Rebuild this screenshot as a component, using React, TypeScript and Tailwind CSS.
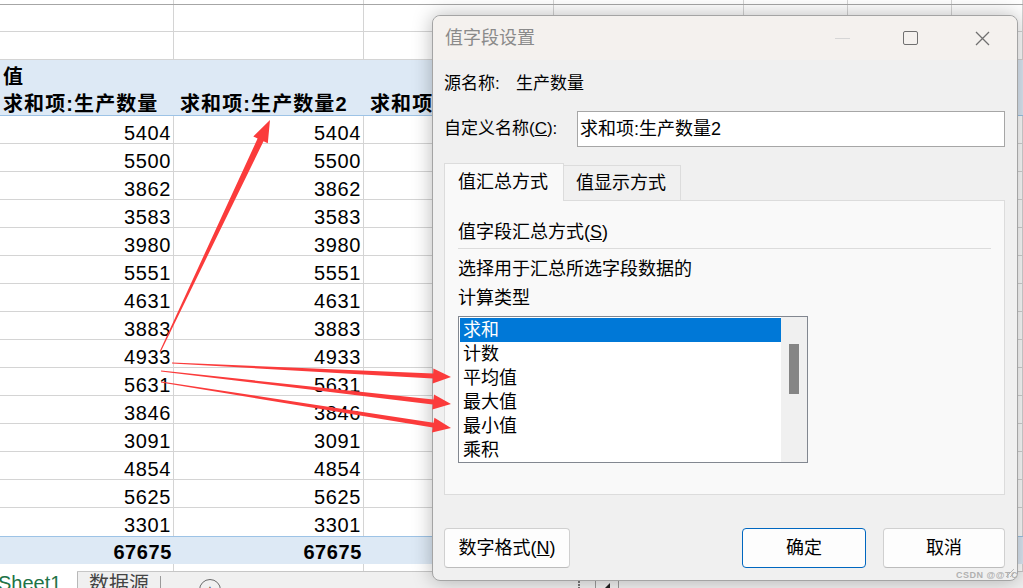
import React from 'react'

const COLS = ['w-[174px]', 'w-[190px]', 'w-[190px]', 'w-[190px]', 'w-[104px]', 'w-[104px]', 'flex-1']

const values = [5404, 5500, 3862, 3583, 3980, 5551, 4631, 3883, 4933, 5631, 3846, 3091, 4854, 5625, 3301]
const total = values.reduce((sum, v) => sum + v, 0)

const methods = ['求和', '计数', '平均值', '最大值', '最小值', '乘积']

type RowProps = {
  className?: string
  cells?: React.ReactNode[]
  lines?: boolean
}

function Row({ className = '', cells = [], lines = true }: RowProps) {
  return (
    <div className={`flex ${className}`}>
      {COLS.map((w, i) => (
        <div key={i} className={`${w} shrink-0 overflow-visible whitespace-nowrap ${lines ? 'border-r border-[#d4d4d4]' : ''}`}>
          {cells[i]}
        </div>
      ))}
    </div>
  )
}

function Num({ v, bold = false }: { v: number; bold?: boolean }) {
  return (
    <div className={`pr-[2px] text-right text-[20px] leading-[20px] tracking-[0.6px] text-black ${bold ? 'pt-[5px] font-bold' : 'pt-[7px]'}`}>
      {v}
    </div>
  )
}

function Sheet() {
  return (
    <div className="flex h-full flex-col font-['Liberation_Sans','Noto_Sans_CJK_SC',sans-serif]">
      <Row className="h-[5px] border-b border-[#a6a6a6]" />
      <Row className="h-[27px] border-b border-[#d4d4d4]" />
      <Row className="h-[28px] border-b border-[#d4d4d4]" />
      {/* pivot header */}
      <Row
        className="h-[28px] bg-[#dde9f5]"
        lines={false}
        cells={[<div className="pl-[3px] pt-[6px] text-[20px] font-bold leading-[22px] text-black">值</div>]}
      />
      <Row
        className="h-[28px] border-b border-[#9dc3e6] bg-[#dde9f5]"
        lines={false}
        cells={[
          <div className="pl-[3px] pt-[5px] text-[20px] font-bold leading-[22px] tracking-[1.1px] text-black">求和项:生产数量</div>,
          <div className="pl-[6px] pt-[5px] text-[20px] font-bold leading-[22px] tracking-[1.1px] text-black">求和项:生产数量2</div>,
          <div className="pl-[6px] pt-[5px] text-[20px] font-bold leading-[22px] tracking-[1.1px] text-black">求和项:生产数量3</div>,
        ]}
      />
      {values.map((v, i) => (
        <Row
          key={i}
          className={`h-[28px] ${i < values.length - 1 ? 'border-b border-[#d4d4d4]' : ''}`}
          cells={[<Num v={v} />, <Num v={v} />]}
        />
      ))}
      <Row
        className="h-[28px] border-t border-[#9dc3e6] bg-[#dde9f5]"
        lines={false}
        cells={[<Num v={total} bold />, <Num v={total} bold />]}
      />
      <Row className="h-[7px]" />
      {/* sheet tabs */}
      <div className="flex h-[17px] items-start border-t border-[#c6c6c6] bg-[#f0f0f0]">
        <div className="-mt-px h-[18px] w-[77px] shrink-0 overflow-hidden bg-white">
          <div className="-ml-[2px] pt-[1px] text-[20px] leading-[22px] text-[#217346]">Sheet1</div>
        </div>
        <div className="flex h-full w-[83px] shrink-0 border-l border-[#b8b8b8]">
          <div className="pl-[11px] pt-[1px] text-[20px] leading-[22px] text-[#444]">数据源</div>
        </div>
        <div className="mt-[4px] h-[13px] w-px bg-[#9a9a9a]" />
        <div className="ml-[38px] mt-[7px] flex h-[22px] w-[22px] shrink-0 items-start justify-center rounded-full border border-[#6a6a6a]">
          <span className="mt-[3px] text-[16px] leading-[16px] text-[#555]">+</span>
        </div>
        <div className="ml-[357px] mt-[9px] h-[8px] w-[2px] border-l-2 border-dotted border-[#777]" />
        <div className="ml-[15px] mt-[6px] h-[11px] w-px bg-[#9a9a9a]" />
        <div className="ml-[8px] mt-[11px] h-0 w-0 border-b-[6px] border-l-[6px] border-b-[#222] border-l-transparent" />
        <div className="ml-[8px] mt-[6px] h-[11px] w-px bg-[#9a9a9a]" />
      </div>
    </div>
  )
}

function TitleBar() {
  return (
    <div className="flex h-[44px] items-center rounded-t-[8px] bg-[#f4f1ee]">
      <div className="pl-[12px] text-[18px] leading-[24px] text-[#8a8a8a]">值字段设置</div>
      <div className="ml-auto flex h-full">
        <div className="flex h-full w-[70px] items-center justify-center">
          <div className="h-px w-[15px] bg-[#d6d6d6]" />
        </div>
        <div className="flex h-full w-[70px] items-center justify-center pr-[3px]">
          <div className="h-[14px] w-[15px] rounded-[2px] border-[1.5px] border-[#707070]" />
        </div>
        <div className="flex h-full w-[70px] items-center justify-center">
          <svg width="15" height="15" viewBox="0 0 15 15">
            <path d="M1 1 L14 14 M14 1 L1 14" stroke="#707070" strokeWidth="1.3" />
          </svg>
        </div>
      </div>
    </div>
  )
}

function ListBox() {
  return (
    <div className="mt-[3px] flex h-[147px] w-[350px] border border-[#828790] bg-white">
      <div className="w-[322px] pl-[1px] pt-[1px]">
        {methods.map((m, i) => (
          <div
            key={m}
            className={`h-[24px] pl-[3px] text-[18px] leading-[24px] ${i === 0 ? 'bg-[#0078d7] text-white' : 'text-black'}`}
          >
            {m}
          </div>
        ))}
      </div>
      <div className="w-[26px] bg-[#f0f0f0] pl-[8px] pt-[27px]">
        <div className="h-[50px] w-[10px] bg-[#858585]" />
      </div>
    </div>
  )
}

function Dialog() {
  return (
    <div className="absolute left-[432px] top-[15px] flex h-[566px] w-[586px] flex-col rounded-[8px] border border-[#a4a4a4] bg-[#f0f0f0] font-['Liberation_Sans','Noto_Sans_CJK_SC',sans-serif] text-black shadow-[0_0_20px_rgba(0,0,0,0.28)]">
      <TitleBar />
      <div className="flex flex-1 flex-col pl-[11px] pr-[12px]">
        <div className="mt-[9px] flex h-[30px] items-center text-[17px]">
          <span className="w-[72px]">源名称:</span>
          <span>生产数量</span>
        </div>
        <div className="mt-[12px] flex h-[36px] items-center">
          <span className="w-[133px] text-[17px]">
            自定义名称(<span className="underline">C</span>):
          </span>
          <div className="flex h-full flex-1 items-center border border-[#a6a6a6] bg-white pl-[2px] text-[18px]">
            求和项:生产数量2
          </div>
        </div>
        {/* tabs */}
        <div className="mt-[16px] flex items-end">
          <div className="relative z-10 -mb-px flex h-[38px] w-[120px] items-center border border-b-0 border-[#dcdcdc] bg-[#f9f9f9] pl-[13px] text-[18px]">
            值汇总方式
          </div>
          <div className="flex h-[35px] w-[117px] items-center border border-b-0 border-l-0 border-[#dcdcdc] bg-[#f0f0f0] pl-[12px] text-[18px]">
            值显示方式
          </div>
        </div>
        <div className="flex h-[295px] flex-col border border-[#dcdcdc] bg-[#f9f9f9] pl-[13px] pr-[13px]">
          <div className="mt-[19px] text-[18px] leading-[24px]">
            值字段汇总方式(<span className="underline">S</span>)
          </div>
          <div className="mt-[4px] h-px bg-[#dcdcdc]" />
          <div className="mt-[6px] text-[18px] leading-[29px]">
            <div>选择用于汇总所选字段数据的</div>
            <div>计算类型</div>
          </div>
          <ListBox />
        </div>
        {/* buttons */}
        <div className="mt-[33px] flex items-center justify-between">
          <button className="h-[40px] w-[126px] rounded-[4px] border border-[#d0d0d0] border-b-[#bcbcbc] bg-[#fdfdfd] text-[18px]">
            数字格式(<span className="underline">N</span>)
          </button>
          <div className="flex gap-[17px]">
            <button className="h-[40px] w-[124px] rounded-[4px] border border-[#0067c0] bg-[#fdfdfd] text-[18px]">确定</button>
            <button className="h-[40px] w-[122px] rounded-[4px] border border-[#d0d0d0] border-b-[#bcbcbc] bg-[#fdfdfd] text-[18px]">取消</button>
          </div>
        </div>
      </div>
      {/* resize grip */}
      <svg className="absolute bottom-[2px] right-[2px]" width="12" height="12" viewBox="0 0 12 12">
        <path d="M11 3 L3 11 M11 7 L7 11" stroke="#b8b8b8" strokeWidth="1" />
      </svg>
    </div>
  )
}

function arrow(x1: number, y1: number, x2: number, y2: number, w0: number, w1: number, L: number, W: number) {
  const dx = x2 - x1
  const dy = y2 - y1
  const len = Math.hypot(dx, dy)
  const ux = dx / len
  const uy = dy / len
  const nx = -uy
  const ny = ux
  const bx = x2 - ux * L
  const by = y2 - uy * L
  const pts = [
    [x1 + (nx * w0) / 2, y1 + (ny * w0) / 2],
    [bx + (nx * w1) / 2, by + (ny * w1) / 2],
    [bx + (nx * W) / 2, by + (ny * W) / 2],
    [x2, y2],
    [bx - (nx * W) / 2, by - (ny * W) / 2],
    [bx - (nx * w1) / 2, by - (ny * w1) / 2],
    [x1 - (nx * w0) / 2, y1 - (ny * w0) / 2],
  ]
  return pts.map((p) => p.map((n) => n.toFixed(1)).join(',')).join(' ')
}

function Arrows() {
  return (
    <svg className="pointer-events-none absolute left-0 top-0" width="1023" height="588" viewBox="0 0 1023 588">
      <g fill="#fb3b3b">
        <polygon points={arrow(160, 352, 270, 120, 1, 6.5, 22, 16)} />
        <polygon points={arrow(172, 363, 451, 377, 1, 5, 18, 15)} />
        <polygon points={arrow(161, 371, 451, 404, 1, 5, 18, 15)} />
        <polygon points={arrow(161, 382, 451, 428, 1, 5, 18, 15)} />
      </g>
    </svg>
  )
}

export default function App() {
  return (
    <div className="relative h-[588px] w-[1023px] overflow-hidden bg-white">
      <Sheet />
      <Dialog />
      <Arrows />
      <div className="absolute left-[956px] top-[570px] text-[9px] font-bold leading-[10px] tracking-[0.5px] text-[#b0b0b0] font-['Liberation_Sans',sans-serif]">
        CSDN @@TC
      </div>
    </div>
  )
}
